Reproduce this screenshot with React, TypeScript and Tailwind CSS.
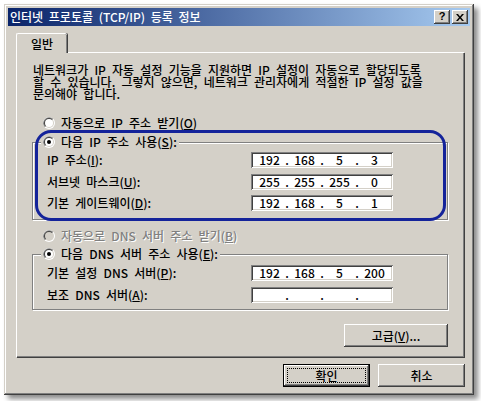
import React from "react";

const FONT = "font-[family-name:'Noto_Sans_CJK_KR',sans-serif]";

function Radio({ checked, disabled }: { checked?: boolean; disabled?: boolean }) {
  return (
    <svg width="12" height="12" viewBox="0 0 12 12" className="shrink-0">
      <circle cx="6" cy="6" r="6" fill="#ffffff" />
      <path d="M1.76 10.24 A6 6 0 0 1 10.24 1.76 Z" fill="#808080" />
      <circle cx="6" cy="6" r="5" fill="#d4d0c8" />
      <path d="M2.46 9.54 A5 5 0 0 1 9.54 2.46 Z" fill="#404040" />
      <circle cx="6" cy="6" r="4" fill={disabled ? "#d4d0c8" : "#ffffff"} />
      {checked && <circle cx="6" cy="6" r="2" fill="#000000" />}
    </svg>
  );
}

function IpField({ parts }: { parts: string[] }) {
  return (
    <div className="w-[142px] h-[16px] bg-white shadow-[inset_1px_1px_0_#808080,inset_-1px_-1px_0_#ffffff,inset_2px_2px_0_#404040,inset_-2px_-2px_0_#d4d0c8] flex items-center pl-[3px] leading-[14px] [word-spacing:0px]">
      {[0, 1, 2, 3].map((i) => (
        <React.Fragment key={i}>
          {i > 0 && <span className="w-[4px] text-center">.</span>}
          <span className="w-[31px] text-center">{parts[i] ?? ""}</span>
        </React.Fragment>
      ))}
    </div>
  );
}

function Row({ label, parts }: { label: React.ReactNode; parts: string[] }) {
  return (
    <div className="flex items-center h-[16px]">
      <div className="w-[204px]">{label}</div>
      <IpField parts={parts} />
    </div>
  );
}

const raised =
  "shadow-[inset_-1px_-1px_0_#404040,inset_1px_1px_0_#ffffff,inset_-2px_-2px_0_#808080,inset_2px_2px_0_#d4d0c8]";
const etched =
  "border border-[#808080] shadow-[inset_1px_1px_0_#ffffff,1px_1px_0_#ffffff]";

export default function App() {
  return (
    <div
      className={`relative w-[481px] h-[401px] bg-white pl-[4px] pt-[4px] text-[12px] font-medium text-black [word-spacing:3.5px] ${FONT}`}
    >
      <div className="w-[470px] h-[391px] bg-[#d4d0c8] p-[4px] shadow-[inset_-1px_-1px_0_#404040,inset_1px_1px_0_#d4d0c8,inset_-2px_-2px_0_#808080,inset_2px_2px_0_#ffffff,4px_4px_5px_rgba(0,0,0,0.45)]">
        {/* Title bar */}
        <div className="h-[18px] flex items-center bg-[linear-gradient(to_right,#0a246a,#a6caf0)] pl-[2px] pr-[2px]">
          <span className="text-white text-[12px] leading-[18px] [word-spacing:3px]">
            인터넷 프로토콜 (TCP/IP) 등록 정보
          </span>
          <div className="ml-auto flex gap-[2px]">
            <div className={`w-[16px] h-[14px] bg-[#d4d0c8] ${raised} flex items-center justify-center`}>
              <span className="font-['Liberation_Sans',sans-serif] font-bold text-[11px] leading-[11px] pb-[1px]">?</span>
            </div>
            <div className={`w-[16px] h-[14px] bg-[#d4d0c8] ${raised} flex items-center justify-center`}>
              <svg width="8" height="7" viewBox="0 0 8 7">
                <path d="M0 0 L2 0 L4 2.5 L6 0 L8 0 L5 3.5 L8 7 L6 7 L4 4.5 L2 7 L0 7 L3 3.5 Z" fill="#000" />
              </svg>
            </div>
          </div>
        </div>

        {/* Body */}
        <div className="pt-[7px] pl-[8px]">
          {/* Tab */}
          <div className="relative z-10 -mb-[1px] w-[51px] h-[20px] bg-[#d4d0c8] border-t border-l border-white rounded-tl-[2px] rounded-tr-[2px] shadow-[inset_-1px_0_0_#808080,1px_0_0_#404040] flex items-center justify-center leading-[16px]">
            일반
          </div>
          {/* Panel */}
          <div className="w-[448px] h-[305px] border-t border-l border-white shadow-[inset_-1px_-1px_0_#808080,1px_1px_0_#404040] px-[15px] pt-[11px]">
            <p className="pl-[1px] leading-[12px]">
              네트워크가 IP 자동 설정 기능을 지원하면 IP 설정이 자동으로 할당되도록
              <br />
              할 수 있습니다. 그렇지 않으면, 네트워크 관리자에게 적절한 IP 설정 값을
              <br />
              문의해야 합니다.
            </p>

            <div className="mt-[15px] ml-[11px] h-[16px] flex items-center gap-[6px]">
              <Radio />
              <span>
                자동으로 IP 주소 받기(<u>O</u>)
              </span>
            </div>

            <fieldset className={`mt-[3px] w-[416px] ${etched} px-[14px] pb-[8px]`}>
              <legend className="ml-[-6px] px-[2px] bg-[#d4d0c8] h-[16px] flex items-center gap-[6px]">
                <Radio checked />
                <span>
                  다음 IP 주소 사용(<u>S</u>):
                </span>
              </legend>
              <div className="pt-[2px] flex flex-col gap-[5.5px]">
                <Row label={<>IP 주소(<u>I</u>):</>} parts={["192", "168", "5", "3"]} />
                <Row label={<>서브넷 마스크(<u>U</u>):</>} parts={["255", "255", "255", "0"]} />
                <Row label={<>기본 게이트웨이(<u>D</u>):</>} parts={["192", "168", "5", "1"]} />
              </div>
            </fieldset>

            <div className="mt-[8px] ml-[11px] h-[16px] flex items-center gap-[6px] text-[#808080] [text-shadow:1px_1px_0_#ffffff]">
              <Radio disabled />
              <span>
                자동으로 DNS 서버 주소 받기(<u>B</u>)
              </span>
            </div>

            <fieldset className={`mt-[2px] w-[416px] ${etched} px-[14px] pb-[6px]`}>
              <legend className="ml-[-6px] px-[2px] bg-[#d4d0c8] h-[16px] flex items-center gap-[6px]">
                <Radio checked />
                <span>
                  다음 DNS 서버 주소 사용(<u>E</u>):
                </span>
              </legend>
              <div className="pt-[3px] flex flex-col gap-[6px]">
                <Row label={<>기본 설정 DNS 서버(<u>P</u>):</>} parts={["192", "168", "5", "200"]} />
                <Row label={<>보조 DNS 서버(<u>A</u>):</>} parts={["", "", "", ""]} />
              </div>
            </fieldset>

            <div className="mt-[14px] w-[416px] flex justify-end">
              <button className={`w-[104px] h-[23px] bg-[#d4d0c8] ${raised} flex items-center justify-center`}>
                <span>
                  고급(<u>V</u>)...
                </span>
              </button>
            </div>
          </div>

          {/* Bottom buttons */}
          <div className="mt-[7px] w-[449px] flex justify-end gap-[8px]">
            <button className="w-[87px] h-[23px] border border-black bg-[#d4d0c8] p-0">
              <div className={`w-full h-full ${raised} p-[3px]`}>
                <div className="w-full h-full border border-dotted border-black flex items-center justify-center">
                  확인
                </div>
              </div>
            </button>
            <button className={`w-[87px] h-[23px] bg-[#d4d0c8] ${raised} flex items-center justify-center`}>
              취소
            </button>
          </div>
        </div>
      </div>

      {/* Blue annotation */}
      <div className="absolute left-[35px] top-[130px] w-[411px] h-[91px] border-[3px] border-[#14239a] rounded-[16px] pointer-events-none" />
    </div>
  );
}
